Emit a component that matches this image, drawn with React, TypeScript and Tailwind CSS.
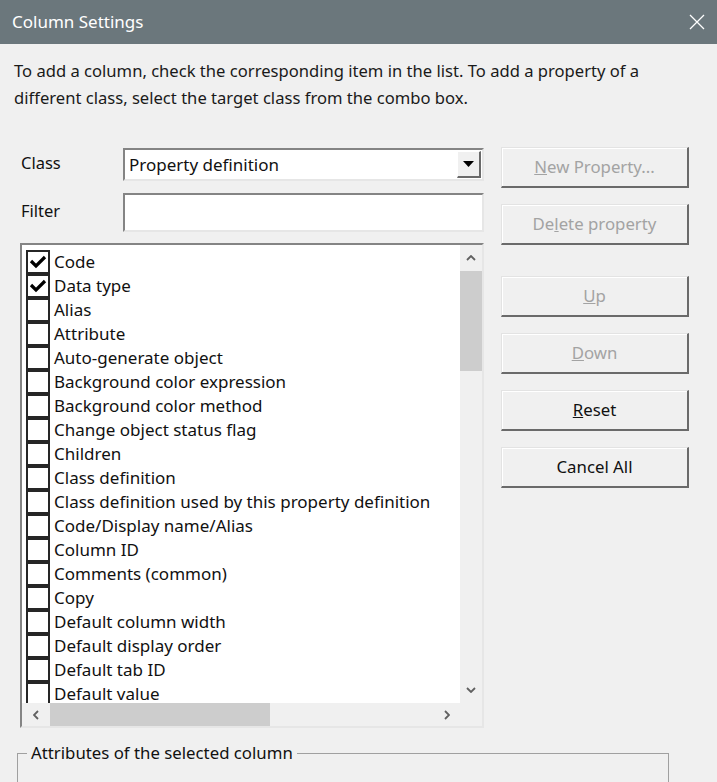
import React from "react";

const items: { label: string; checked?: boolean }[] = [
  { label: "Code", checked: true },
  { label: "Data type", checked: true },
  { label: "Alias" },
  { label: "Attribute" },
  { label: "Auto-generate object" },
  { label: "Background color expression" },
  { label: "Background color method" },
  { label: "Change object status flag" },
  { label: "Children" },
  { label: "Class definition" },
  { label: "Class definition used by this property definition" },
  { label: "Code/Display name/Alias" },
  { label: "Column ID" },
  { label: "Comments (common)" },
  { label: "Copy" },
  { label: "Default column width" },
  { label: "Default display order" },
  { label: "Default tab ID" },
  { label: "Default value" },
];

function Check({ checked }: { checked?: boolean }) {
  return (
    <div className="w-[24px] h-[24px] border-2 border-[#262626] bg-white flex items-center justify-center shrink-0">
      {checked && (
        <svg width="18" height="14" viewBox="0 0 18 14">
          <polyline points="2,6 7,11 16,2" fill="none" stroke="#000" strokeWidth="3.2" />
        </svg>
      )}
    </div>
  );
}

function Btn({ children, disabled, mt }: { children: React.ReactNode; disabled?: boolean; mt: string }) {
  return (
    <div
      className={`${mt} h-[41px] w-[188px] flex items-center justify-center bg-[#f0f0f0] border border-[#e3e3e3] border-b-2 border-r-2 border-b-[#6a6a6a] border-r-[#6a6a6a] shadow-[inset_1px_1px_0_#ffffff] text-[16.8px] ${
        disabled ? "text-[#a3a3a3]" : "text-[#111]"
      }`}
    >
      {children}
    </div>
  );
}

export default function App() {
  return (
    <div
      className="w-[717px] h-[782px] overflow-hidden bg-[#f0f0f0] text-[#111]"
      style={{ fontFamily: '"Noto Sans", "Open Sans", sans-serif' }}
    >
      <div className="h-[44px] bg-[#6b777c] flex items-center justify-between pl-[12px] pr-[12px]">
        <span className="text-white text-[17px]">Column Settings</span>
        <svg width="16" height="16" viewBox="0 0 16 16">
          <path d="M1 1 L15 15 M15 1 L1 15" stroke="#fff" strokeWidth="1.3" />
        </svg>
      </div>

      <div className="pl-[14px] pr-[8px] pt-[13px] text-[16.6px] leading-[27px] text-[#1a1a1a] whitespace-nowrap">
        <p>To add a column, check the corresponding item in the list. To add a property of a</p>
        <p>different class, select the target class from the combo box.</p>
      </div>

      <div className="flex pl-[20px] mt-[36px] gap-[17px]">
        <div className="w-[464px] pt-[1px]">
          <div className="flex items-center h-[33px]">
            <span className="w-[103px] pl-[1px] text-[16.5px] -mt-[3px]">Class</span>
            <div className="flex-1 h-full flex items-stretch bg-white border-2 border-t-[#848484] border-l-[#848484] border-b-[#e6e6e6] border-r-[#e6e6e6]">
              <span className="flex-1 pl-[4px] text-[17px] flex items-center">Property definition</span>
              <div className="w-[24px] my-[1px] mr-[1px] bg-[#f0f0f0] flex items-center justify-center border border-t-white border-l-white border-b-2 border-r-2 border-b-[#6a6a6a] border-r-[#6a6a6a]">
                <svg width="11" height="6" viewBox="0 0 11 6">
                  <polygon points="0,0 11,0 5.5,6" fill="#000" />
                </svg>
              </div>
            </div>
          </div>

          <div className="flex items-center h-[39px] mt-[12px]">
            <span className="w-[103px] pl-[1px] text-[16.5px] -mt-[2px]">Filter</span>
            <div className="flex-1 h-full bg-white border-2 border-t-[#848484] border-l-[#848484] border-b-[#e6e6e6] border-r-[#e6e6e6]" />
          </div>

          <div className="mt-[11px] h-[485px] border-2 border-t-[#848484] border-l-[#848484] border-b-[#e6e6e6] border-r-[#e6e6e6] bg-white flex flex-col">
            <div className="flex flex-1 min-h-0">
              <div className="flex-1 overflow-hidden pt-[5px] pl-[4px]">
                {items.map((it) => (
                  <div key={it.label} className="h-[24px] flex items-center gap-[4px] whitespace-nowrap text-[17px]">
                    <Check checked={it.checked} />
                    <span>{it.label}</span>
                  </div>
                ))}
              </div>
              <div className="w-[22px] bg-[#f0f0f0] flex flex-col items-center">
                <div className="h-[26px] flex items-center justify-center">
                  <svg width="10" height="6" viewBox="0 0 10 6">
                    <polyline points="1,5 5,1 9,5" fill="none" stroke="#606060" strokeWidth="1.8" />
                  </svg>
                </div>
                <div className="w-full h-[100px] bg-[#cdcdcd]" />
                <div className="flex-1" />
                <div className="h-[26px] flex items-center justify-center">
                  <svg width="10" height="6" viewBox="0 0 10 6">
                    <polyline points="1,1 5,5 9,1" fill="none" stroke="#606060" strokeWidth="1.8" />
                  </svg>
                </div>
              </div>
            </div>
            <div className="h-[23px] flex bg-[#f0f0f0]">
              <div className="w-[28px] flex items-center justify-center">
                <svg width="6" height="10" viewBox="0 0 6 10">
                  <polyline points="5,1 1,5 5,9" fill="none" stroke="#606060" strokeWidth="1.8" />
                </svg>
              </div>
              <div className="w-[220px] bg-[#cdcdcd]" />
              <div className="flex-1" />
              <div className="w-[26px] flex items-center justify-center">
                <svg width="6" height="10" viewBox="0 0 6 10">
                  <polyline points="1,1 5,5 1,9" fill="none" stroke="#606060" strokeWidth="1.8" />
                </svg>
              </div>
              <div className="w-[22px]" />
            </div>
          </div>
        </div>

        <div className="flex flex-col">
          <Btn disabled mt="mt-0">
            <span>
              <span className="underline">N</span>ew Property...
            </span>
          </Btn>
          <Btn disabled mt="mt-[16px]">
            <span>
              De<span className="underline">l</span>ete property
            </span>
          </Btn>
          <Btn disabled mt="mt-[31px]">
            <span>
              <span className="underline">U</span>p
            </span>
          </Btn>
          <Btn disabled mt="mt-[16px]">
            <span>
              <span className="underline">D</span>own
            </span>
          </Btn>
          <Btn mt="mt-[16px]">
            <span>
              <span className="underline">R</span>eset
            </span>
          </Btn>
          <Btn mt="mt-[16px]">Cancel All</Btn>
        </div>
      </div>

      <fieldset className="ml-[17px] mt-[14px] w-[652px] h-[100px] border border-[#a0a0a0] pl-[9px]">
        <legend className="px-[4px] text-[16.8px] leading-[22px]">Attributes of the selected column</legend>
      </fieldset>
    </div>
  );
}
